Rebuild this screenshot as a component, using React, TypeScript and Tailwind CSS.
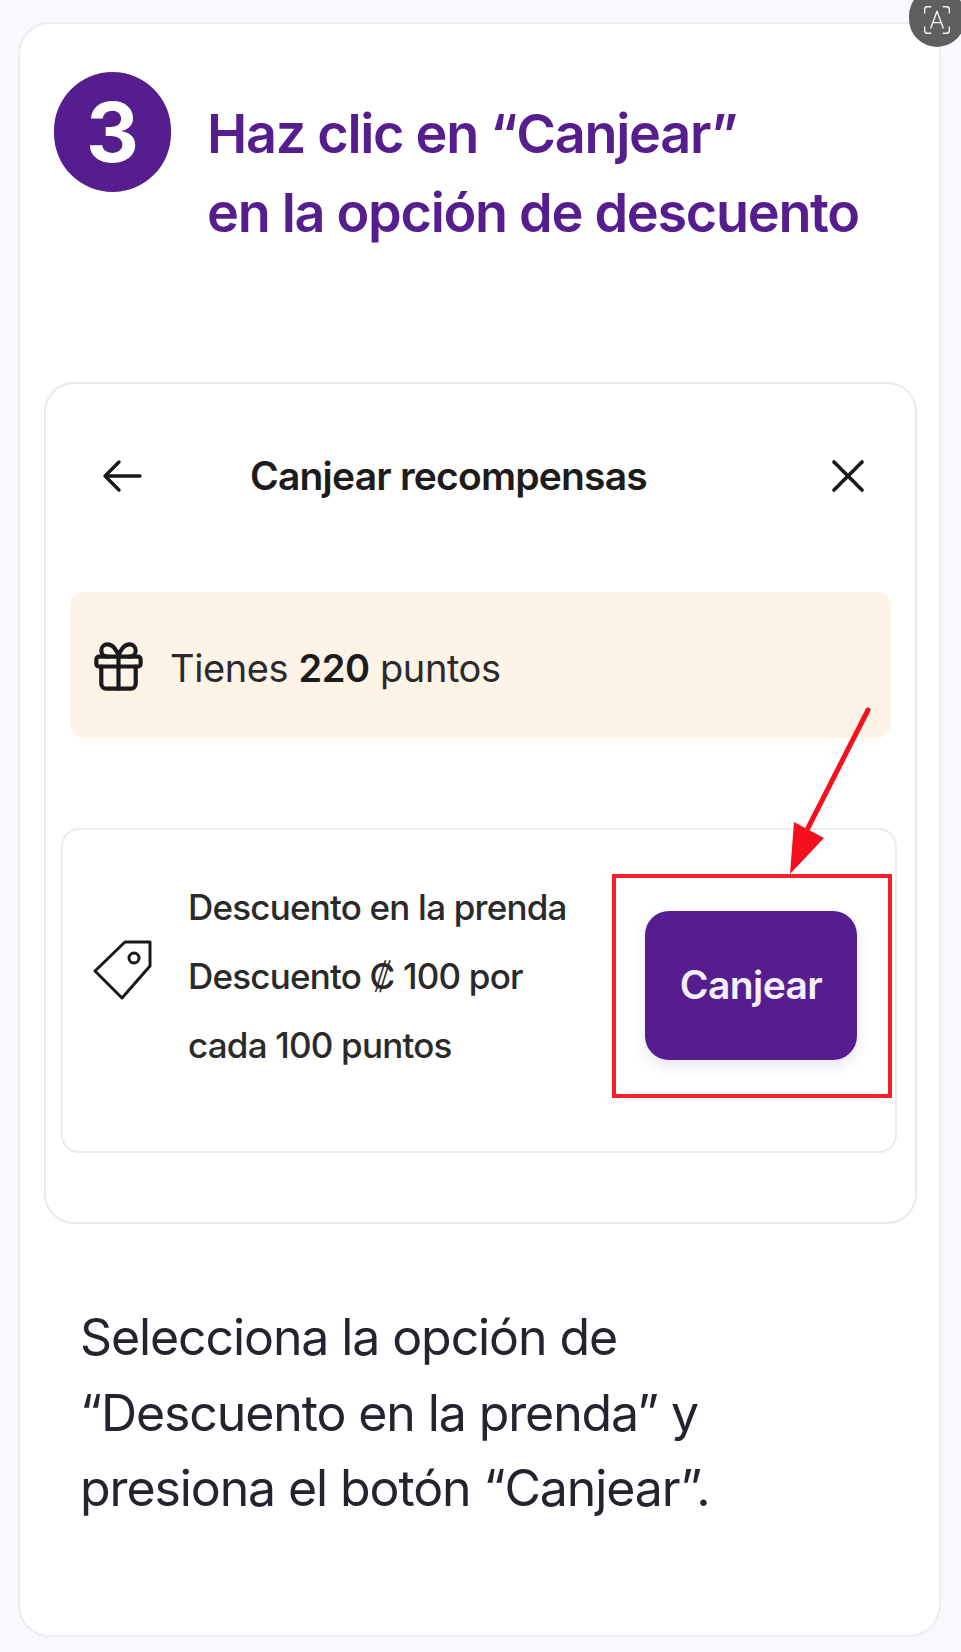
import React from "react";
import { Gift, X } from "lucide-react";

const fontStack = "font-['Inter','Noto_Sans',sans-serif]";

const RedeemOption: React.FC = () => (
  <div className="relative mt-[90px] -ml-[9px] -mr-1.5 flex h-[325px] rounded-[18px] border-2 border-[#ebebf0] bg-white pl-[30px] pr-[3px]">
    <svg
      className="mt-[110px] h-[60px] w-[60px] shrink-0"
      viewBox="0 0 60 60"
      fill="none"
      stroke="#1a1a1a"
      strokeWidth="3"
      strokeLinejoin="round"
    >
      <path d="M32 2H57V26L29 58L2 31Z" />
      <circle cx="41" cy="18" r="5" />
    </svg>
    <div className="ml-[35px] mt-[43px] w-[425px] text-[35px] font-medium leading-[69px] tracking-[-0.8px] text-[#2a2a2a]">
      <p>Descuento en la prenda</p>
      <p>Descuento ₡ 100 por</p>
      <p>cada 100 puntos</p>
    </div>
    <div className="mt-[44px] flex h-[224px] w-[280px] shrink-0 items-center justify-center border-4 border-[#f8202a] pr-0.5">
      <button
        type="button"
        className="h-[149px] w-[212px] rounded-[24px] bg-[#561d8f] text-[39px] font-semibold tracking-[-0.6px] text-[#f5effa] shadow-[0_6px_14px_rgba(86,29,143,0.12)]"
      >
        Canjear
      </button>
    </div>
    <svg
      className="absolute -top-[124px] right-[21px] h-[172px] w-[100px]"
      viewBox="0 0 100 172"
      fill="none"
    >
      <path d="M94 4 L34 122" stroke="#f5101e" strokeWidth="5" strokeLinecap="round" />
      <path d="M16 168 L20 116 L50 132 Z" fill="#f5101e" />
    </svg>
  </div>
);

export default function App() {
  return (
    <div className={`relative h-[1652px] w-[961px] overflow-hidden bg-[#f9f8fc] pt-[22px] pl-[18px] ${fontStack}`}>
      <div className="h-[1615px] w-[923px] rounded-[32px] border-2 border-[#ececf3] bg-white px-[24px]">
        <div className="flex pl-2.5 pt-[48px]">
          <div className="flex h-[120px] w-[117px] shrink-0 items-center justify-center rounded-full bg-[#561d8f] text-[82px] font-bold text-white">
            3
          </div>
          <h1 className="ml-[36px] mt-[22px] text-[54px] font-semibold leading-[79px] tracking-[-1.3px] text-[#561d8f]">
            Haz clic en “Canjear”
            <br />
            en la opción de descuento
          </h1>
        </div>

        <div className="mt-[130px] h-[842px] w-[873px] rounded-[30px] border-2 border-[#e9e9ee] bg-white px-[24px]">
          <div className="flex items-center pl-8 pr-[15px] pt-[63px]">
            <svg className="h-[34px] w-10 shrink-0" viewBox="0 0 40 34" fill="none" stroke="#1a1a1a" strokeWidth="3.4" strokeLinecap="round" strokeLinejoin="round">
              <path d="M38 17H3M17 3L3 17L17 31" />
            </svg>
            <h2 className="ml-[108px] text-[39px] font-semibold tracking-[-0.8px] text-[#1c1c1c]">
              Canjear recompensas
            </h2>
            <X className="ml-auto h-14 w-14 text-[#1a1a1a]" strokeWidth={1.6} />
          </div>

          <div className="mt-[86px] flex h-[146px] items-center rounded-[14px] bg-[#fdf3e7] pl-[19px] text-[38px] tracking-[-0.4px] text-[#2a2a2a]">
            <Gift className="mt-1 h-[59px] w-[59px] text-[#1a1a1a]" strokeWidth={1.7} />
            <span className="ml-[22px] mt-2">
              Tienes <b className="font-semibold text-[#1c1c1c]">220</b> puntos
            </span>
          </div>

          <RedeemOption />
        </div>

        <p className="ml-[36px] mt-[76px] text-[50px] leading-[75.5px] tracking-[-1.1px] text-[#24242e]">
          Selecciona la opción de
          <br />
          “Descuento en la prenda” y
          <br />
          presiona el botón “Canjear”.
        </p>
      </div>

      <div className="absolute -top-3 -right-1 flex h-[59px] w-14 items-end justify-center rounded-full bg-[#5f5f5f] pb-3">
        <svg className="h-[30px] w-[32px]" viewBox="0 0 34 34" fill="none" stroke="#f4f4f4" strokeWidth="1.6" strokeLinecap="round" strokeLinejoin="round">
          <path d="M3 9V5a3 3 0 0 1 3-3h4M24 2h4a3 3 0 0 1 3 3v4M31 25v4a3 3 0 0 1-3 3h-4M10 32H6a3 3 0 0 1-3-3v-4" />
          <path d="M10 26 17 7l7 19M12.5 20h9" />
        </svg>
      </div>
    </div>
  );
}
